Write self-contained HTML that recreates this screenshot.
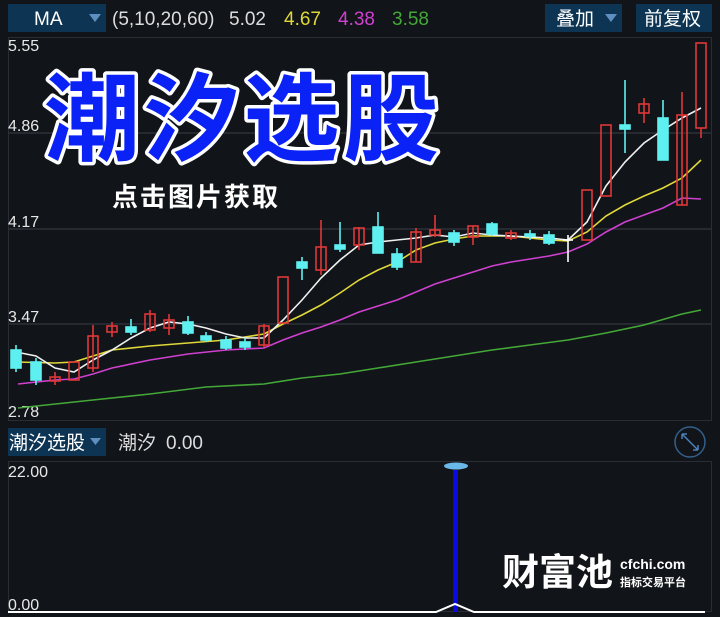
<!DOCTYPE html>
<html><head><meta charset="utf-8"><style>
body{margin:0;background:#111418;width:720px;height:617px;overflow:hidden;font-family:"Liberation Sans","Noto Sans CJK SC",sans-serif}
svg{display:block}
</style></head><body>
<svg width="720" height="617" xmlns="http://www.w3.org/2000/svg" font-family="Liberation Sans, Noto Sans CJK SC, sans-serif">
<rect width="720" height="617" fill="#111418"/>
<!-- header -->
<rect x="8" y="4" width="98" height="28" fill="#0d3553"/>
<text x="34" y="25" fill="#fff" font-size="19">MA</text>
<path d="M89 14h12l-6 8z" fill="#5f8fc0"/>
<text x="112" y="25" fill="#ddd" font-size="19">(5,10,20,60)</text>
<text x="229" y="25" fill="#ddd" font-size="19">5.02</text>
<text x="284" y="25" fill="#e0d838" font-size="19">4.67</text>
<text x="338" y="25" fill="#d040d0" font-size="19">4.38</text>
<text x="392" y="25" fill="#44a838" font-size="19">3.58</text>
<rect x="545" y="4" width="77" height="28" fill="#0d3553"/>
<text x="556" y="25" fill="#fff" font-size="19">叠加</text>
<path d="M605 14h12l-6 8z" fill="#5f8fc0"/>
<rect x="636" y="4" width="76" height="28" fill="#0d3553"/>
<text x="644" y="25" fill="#fff" font-size="19">前复权</text>
<!-- main panel -->
<rect x="8.5" y="37.5" width="703" height="383" fill="none" stroke="#2a2e34"/>
<g stroke="#2e3238" stroke-width="1.5"><line x1="9" y1="133" x2="711" y2="133"/><line x1="9" y1="229" x2="711" y2="229"/><line x1="9" y1="324" x2="711" y2="324"/></g>
<g fill="#e8e8e8" font-size="16"><text x="8" y="51">5.55</text><text x="8" y="131">4.86</text><text x="8" y="227">4.17</text><text x="8" y="322">3.47</text><text x="8" y="417">2.78</text></g>
<!-- MA lines -->
<g fill="none" stroke-width="1.6">
<polyline stroke="#44a838" points="18,408 93,400 150,394 206,387 264,384 302,378 340,374 378,368 416,362 454,356 492,350 530,345 568,340 606,333 644,325 682,314 701,310"/>
<polyline stroke="#d040d0" points="18,384 55,380 74,379 93,374 112,368 150,360 188,354 226,350 264,348 283,340 302,333 321,327 340,320 359,312 378,306 397,300 416,292 435,284 454,278 473,272 492,266 511,262 549,256 568,252 587,244 606,232 625,222 644,215 663,208 682,198 701,199"/>
<polyline stroke="#e0d838" points="16,362 55,363 74,362 93,356 112,350 150,346 188,343 226,340 264,334 283,324 302,315 321,305 340,293 359,280 378,270 397,262 416,250 435,243 454,239 473,236 511,236 549,240 568,241 587,232 606,216 625,205 644,196 663,188 682,178 701,160"/>
<polyline stroke="#f0f0f0" points="16,352 36,356 55,368 74,372 93,360 112,350 131,338 150,328 169,322 188,324 206,328 226,334 245,338 264,338 283,320 302,300 321,278 340,260 359,245 378,242 397,240 416,238 435,235 454,237 473,233 492,235 511,236 530,237 549,238 568,240 587,222 606,186 625,162 644,143 663,130 682,118 701,108"/>
</g>
<!-- candles -->
<g stroke-width="1.6">
<g stroke="#5ef0f0" fill="#5ef0f0">
<line x1="16" y1="345" x2="16" y2="372"/><rect x="11" y="350" width="10" height="18"/>
<line x1="36" y1="358" x2="36" y2="385"/><rect x="31" y="362" width="10" height="18"/>
<line x1="131" y1="319" x2="131" y2="335"/><rect x="126" y="327" width="10" height="5"/>
<line x1="188" y1="316" x2="188" y2="335"/><rect x="183" y="322" width="10" height="11"/>
<line x1="206" y1="332" x2="206" y2="342"/><rect x="201" y="336" width="10" height="4"/>
<line x1="226" y1="336" x2="226" y2="350"/><rect x="221" y="340" width="10" height="8"/>
<line x1="245" y1="338" x2="245" y2="350"/><rect x="240" y="342" width="10" height="5"/>
<line x1="302" y1="257" x2="302" y2="280"/><rect x="297" y="262" width="10" height="6"/>
<line x1="340" y1="222" x2="340" y2="252"/><rect x="335" y="245" width="10" height="4"/>
<line x1="378" y1="212" x2="378" y2="253"/><rect x="373" y="227" width="10" height="26"/>
<line x1="397" y1="248" x2="397" y2="270"/><rect x="392" y="254" width="10" height="13"/>
<line x1="454" y1="230" x2="454" y2="246"/><rect x="449" y="233" width="10" height="9"/>
<line x1="492" y1="222" x2="492" y2="236"/><rect x="487" y="224" width="10" height="10"/>
<line x1="530" y1="230" x2="530" y2="240"/><rect x="525" y="234" width="10" height="2"/>
<line x1="549" y1="231" x2="549" y2="245"/><rect x="544" y="235" width="10" height="8"/>
<line x1="625" y1="80" x2="625" y2="153"/><rect x="620" y="125" width="10" height="4"/>
<line x1="663" y1="100" x2="663" y2="160"/><rect x="658" y="118" width="10" height="42"/>
</g>
<g stroke="#e03838" fill="none">
<line x1="55" y1="372" x2="55" y2="385"/><rect x="50" y="377" width="10" height="4"/>
<rect x="69" y="362" width="10" height="18"/>
<line x1="93" y1="325" x2="93" y2="372"/><rect x="88" y="336" width="10" height="32"/>
<line x1="112" y1="322" x2="112" y2="337"/><rect x="107" y="326" width="10" height="6"/>
<line x1="150" y1="310" x2="150" y2="332"/><rect x="145" y="314" width="10" height="16"/>
<line x1="169" y1="314" x2="169" y2="335"/><rect x="164" y="320" width="10" height="8"/>
<line x1="264" y1="324" x2="264" y2="347"/><rect x="259" y="326" width="10" height="19"/>
<rect x="278" y="277" width="10" height="46"/>
<line x1="321" y1="220" x2="321" y2="275"/><rect x="316" y="247" width="10" height="23"/>
<line x1="359" y1="227" x2="359" y2="250"/><rect x="354" y="228" width="10" height="17"/>
<line x1="416" y1="228" x2="416" y2="262"/><rect x="411" y="232" width="10" height="30"/>
<line x1="435" y1="215" x2="435" y2="237"/><rect x="430" y="230" width="10" height="5"/>
<line x1="473" y1="226" x2="473" y2="245"/><rect x="468" y="226" width="10" height="11"/>
<line x1="511" y1="230" x2="511" y2="240"/><rect x="506" y="233" width="10" height="5"/>
<rect x="582" y="190" width="10" height="50"/>
<rect x="601" y="125" width="10" height="71"/>
<line x1="644" y1="98" x2="644" y2="123"/><rect x="639" y="104" width="10" height="9"/>
<line x1="682" y1="92" x2="682" y2="205"/><rect x="677" y="115" width="10" height="90"/>
<line x1="701" y1="128" x2="701" y2="138"/><rect x="696" y="43" width="10" height="85"/>
</g>
<g stroke="#fff"><line x1="568" y1="235" x2="568" y2="262"/><line x1="563" y1="240" x2="573" y2="240"/></g>
</g>
<!-- watermark title -->
<text x="44" y="153" font-size="96" font-weight="bold" fill="#0a22f5" stroke="#fff" stroke-width="7" paint-order="stroke" stroke-linejoin="round" textLength="395" lengthAdjust="spacing">潮汐选股</text>
<text x="112" y="206" font-size="26" font-weight="bold" fill="#fff" letter-spacing="2">点击图片获取</text>
<!-- indicator row -->
<rect x="8" y="428" width="98" height="28" fill="#0d3553"/>
<text x="9" y="449" fill="#fff" font-size="19">潮汐选股</text>
<path d="M90 438h11l-5.5 7z" fill="#5f8fc0"/>
<text x="118" y="449" fill="#ddd" font-size="19">潮汐</text>
<text x="166" y="449" fill="#ddd" font-size="19">0.00</text>
<circle cx="690" cy="442" r="15" fill="none" stroke="#33608a" stroke-width="1.5"/>
<path d="M682 434l16 16M682 434v5M682 434h5M698 450v-5M698 450h-5" stroke="#4a82b8" stroke-width="1.5" fill="none"/>
<!-- lower panel -->
<rect x="8.5" y="461.5" width="703" height="150" fill="none" stroke="#2a2e34"/>
<text x="8" y="477" fill="#e8e8e8" font-size="16">22.00</text>
<text x="8" y="610" fill="#e8e8e8" font-size="16">0.00</text>
<rect x="453" y="470" width="5" height="142" fill="#0a0ae0"/>
<ellipse cx="456" cy="466" rx="12" ry="3.5" fill="#6ab8e8"/>
<polyline points="8,612 436,612 455,604 474,612 705,612" fill="none" stroke="#fff" stroke-width="2"/>
<!-- logo -->
<text x="502" y="585" fill="#fff" font-size="37" font-weight="bold">财富池</text>
<text x="620" y="569" fill="#fff" font-size="14" font-weight="bold">cfchi.com</text>
<text x="620" y="586" fill="#fff" font-size="11" font-weight="bold">指标交易平台</text>
</svg>
</body></html>
